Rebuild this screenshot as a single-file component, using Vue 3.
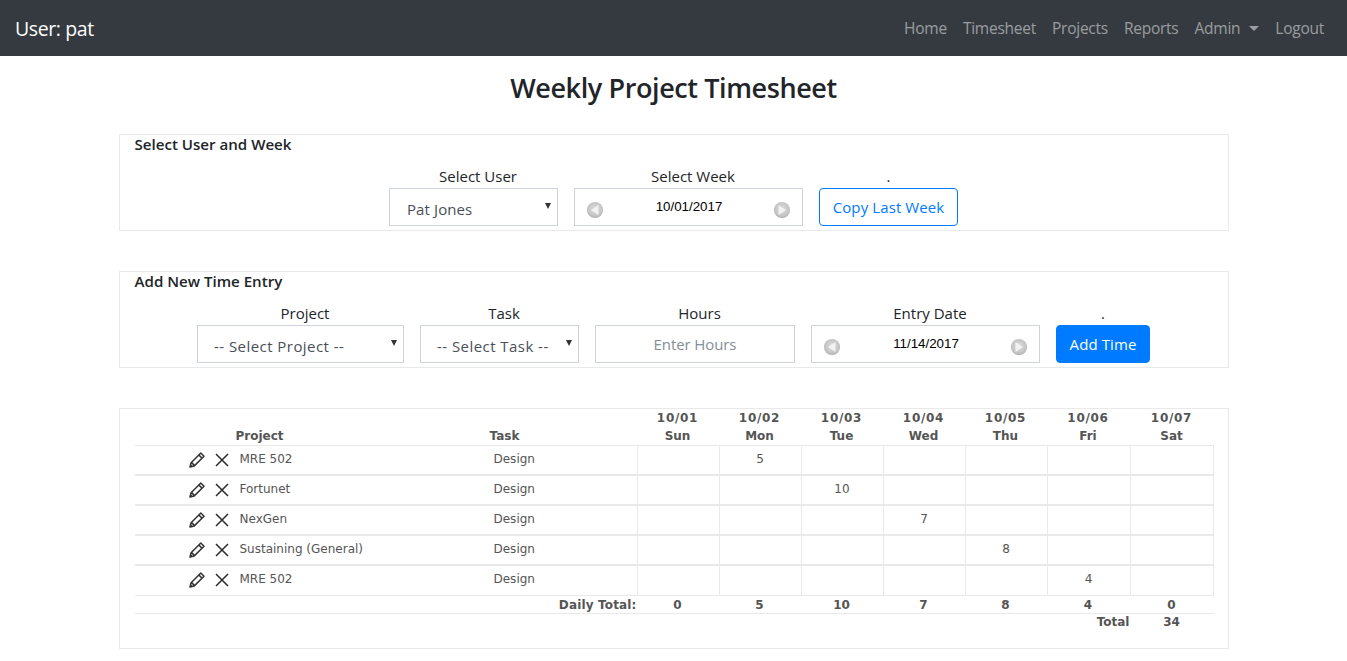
<script setup>
const weekDays = [
  { date: "10/01", day: "Sun" },
  { date: "10/02", day: "Mon" },
  { date: "10/03", day: "Tue" },
  { date: "10/04", day: "Wed" },
  { date: "10/05", day: "Thu" },
  { date: "10/06", day: "Fri" },
  { date: "10/07", day: "Sat" },
];

const entries = [
  { project: "MRE 502", task: "Design", hours: ["", 5, "", "", "", "", ""] },
  { project: "Fortunet", task: "Design", hours: ["", "", 10, "", "", "", ""] },
  { project: "NexGen", task: "Design", hours: ["", "", "", 7, "", "", ""] },
  { project: "Sustaining (General)", task: "Design", hours: ["", "", "", "", 8, "", ""] },
  { project: "MRE 502", task: "Design", hours: ["", "", "", "", "", 4, ""] },
];

const dailyTotals = [0, 5, 10, 7, 8, 4, 0];
const navLinks = ["Home", "Timesheet", "Projects", "Reports"];
</script>

<template>
  <nav class="navbar">
    <span class="brand">User: pat</span>
    <ul class="nav">
      <li v-for="link in navLinks" :key="link"><a>{{ link }}</a></li>
      <li><a class="dropdown">Admin</a></li>
      <li><a>Logout</a></li>
    </ul>
  </nav>

  <main class="container">
    <h3 class="title">Weekly Project Timesheet</h3>

    <section class="panel panel-week">
      <h6>Select User and Week</h6>
      <div class="fields">
        <div class="field">
          <label>Select User</label>
          <div class="select w-user"><span>Pat Jones</span><i></i></div>
        </div>
        <div class="field">
          <label>Select Week</label>
          <div class="datepicker">
            <svg class="arrow" viewBox="0 0 18 18"><defs><radialGradient id="g1" cx="50%" cy="45%" r="55%"><stop offset="0" stop-color="#dedede" /><stop offset="0.8" stop-color="#c4c4c4" /><stop offset="1" stop-color="#a9a9a9" /></radialGradient></defs><circle cx="9" cy="9" r="8" fill="url(#g1)" /><path d="M12.5 4v10L5 9z" fill="#f2f2f2" /></svg>
            <input class="date-input" value="10/01/2017" />
            <svg class="arrow" viewBox="0 0 18 18"><circle cx="9" cy="9" r="8" fill="url(#g1)" /><path d="M5.5 4v10L13 9z" fill="#f2f2f2" /></svg>
          </div>
        </div>
        <div class="field">
          <label class="dot">.</label>
          <button class="btn btn-outline">Copy Last Week</button>
        </div>
      </div>
    </section>

    <section class="panel panel-entry">
      <h6>Add New Time Entry</h6>
      <div class="fields">
        <div class="field">
          <label>Project</label>
          <div class="select w-project"><span>-- Select Project --</span><i></i></div>
        </div>
        <div class="field">
          <label>Task</label>
          <div class="select w-task"><span>-- Select Task --</span><i></i></div>
        </div>
        <div class="field">
          <label>Hours</label>
          <input class="hours" placeholder="Enter Hours" />
        </div>
        <div class="field">
          <label>Entry Date</label>
          <div class="datepicker">
            <svg class="arrow" viewBox="0 0 18 18"><circle cx="9" cy="9" r="8" fill="url(#g1)" /><path d="M12.5 4v10L5 9z" fill="#f2f2f2" /></svg>
            <input class="date-input" value="11/14/2017" />
            <svg class="arrow" viewBox="0 0 18 18"><circle cx="9" cy="9" r="8" fill="url(#g1)" /><path d="M5.5 4v10L13 9z" fill="#f2f2f2" /></svg>
          </div>
        </div>
        <div class="field">
          <label class="dot">.</label>
          <button class="btn btn-primary">Add Time</button>
        </div>
      </div>
    </section>

    <section class="panel panel-table">
      <table class="sheet">
        <colgroup>
          <col class="c-actions" />
          <col class="c-project" />
          <col class="c-task" />
          <col v-for="d in weekDays" :key="d.date" class="c-day" />
        </colgroup>
        <thead>
          <tr>
            <th></th>
            <th class="left head-project">Project</th>
            <th class="left head-task">Task</th>
            <th v-for="d in weekDays" :key="d.date"><span class="th-date">{{ d.date }}</span><br />{{ d.day }}</th>
          </tr>
        </thead>
        <tbody>
          <tr v-for="(row, i) in entries" :key="i">
            <td class="actions">
              <svg class="icon" viewBox="0 0 16 16"><path d="M11.8 1l3.2 3.2L5.3 13.9 1 15l1.1-4.3z M10.2 3.4l2.4 2.4 M2.9 10.9l2.2 2.2" fill="none" stroke="#333" stroke-width="1.5" stroke-linejoin="round" /><path d="M1 15l.7-2.8 2.1 2.1z" fill="#333" /></svg>
              <svg class="icon x" viewBox="0 0 14 14"><path d="M1 1l12 12M13 1L1 13" fill="none" stroke="#2b2b2b" stroke-width="1.5" /></svg>
            </td>
            <td class="left">{{ row.project }}</td>
            <td class="left task">{{ row.task }}</td>
            <td v-for="(h, j) in row.hours" :key="j" class="hour">{{ h }}</td>
          </tr>
        </tbody>
        <tfoot>
          <tr class="daily">
            <td colspan="3" class="daily-label">Daily Total:</td>
            <td v-for="(t, j) in dailyTotals" :key="j">{{ t }}</td>
          </tr>
          <tr class="grand">
            <td colspan="9" class="grand-label">Total</td>
            <td class="grand-value">34</td>
          </tr>
        </tfoot>
      </table>
    </section>
  </main>
</template>

<style>
body {
  background: #fff;
}
</style>

<style scoped>
.navbar {
  height: 56px;
  box-sizing: border-box;
  background: #343a40;
  display: flex;
  align-items: center;
  justify-content: space-between;
  padding: 0 15px 0 15px;
  font-family: "Open Sans", "Noto Sans", sans-serif;
}

.brand {
  color: #fff;
  font-size: 19.5px;
  letter-spacing: -0.4px;
}

.nav {
  display: flex;
  list-style: none;
  margin: 0;
  padding: 0;
}

.nav a {
  display: block;
  padding: 8px;
  font-size: 15.5px;
  letter-spacing: -0.25px;
  color: rgba(255, 255, 255, 0.5);
}

.dropdown::after {
  content: "";
  display: inline-block;
  margin-left: 9px;
  vertical-align: 3px;
  border-top: 5px solid rgba(255, 255, 255, 0.5);
  border-left: 5px solid transparent;
  border-right: 5px solid transparent;
}

.container {
  width: 1110px;
  margin: 0 auto;
  font-family: "Open Sans", "Noto Sans", sans-serif;
  color: #212529;
}

.title {
  margin: 0;
  padding-top: 14px;
  height: 78px;
  box-sizing: border-box;
  text-align: center;
  font-size: 27px;
  font-weight: 600;
  line-height: 35px;
  letter-spacing: -0.4px;
}

.panel {
  border: 1px solid #e9e9e9;
  box-sizing: border-box;
}

.panel h6 {
  margin: 0;
  padding-left: 15px;
  font-size: 15.1px;
  font-weight: 600;
  line-height: 19px;
}

.panel-week {
  height: 97px;
  margin-bottom: 40px;
}

.panel-entry {
  height: 97px;
  margin-bottom: 40px;
}

.panel-table {
  height: 241px;
  padding: 0 14px 0 15px;
}

.fields {
  display: flex;
  justify-content: center;
  gap: 16px;
  margin-top: 12px;
}

.field {
  display: flex;
  flex-direction: column;
  align-items: center;
}

.field label {
  height: 22px;
  line-height: 20px;
  font-size: 15px;
  padding-left: 9px;
}

.field label.dot {
  padding-left: 0;
}

.select {
  position: relative;
  height: 38px;
  box-sizing: border-box;
  border: 1px solid #ced4da;
  padding: 10px 0 0 17px;
  font-size: 15px;
  line-height: 20px;
  letter-spacing: 0.1px;
  color: #495057;
}

.select i {
  position: absolute;
  right: 6px;
  top: 14px;
  border-top: 6px solid #333;
  border-left: 3px solid transparent;
  border-right: 3px solid transparent;
}

.w-user {
  width: 169px;
}

.w-project {
  width: 207px;
  padding-left: 16px;
  letter-spacing: 0.45px;
}

.w-task {
  width: 159px;
  padding-left: 16px;
  letter-spacing: 0.45px;
}

.datepicker {
  width: 229px;
  height: 38px;
  box-sizing: border-box;
  border: 1px solid #ced4da;
  padding: 1px 11px 0;
  display: flex;
  align-items: center;
  justify-content: space-between;
}

.arrow {
  width: 18px;
  height: 18px;
  margin-top: 5px;
}

.date-input {
  width: 150px;
  border: 0;
  outline: 0;
  padding: 0 0 0 1px;
  margin-top: -2px;
  text-align: center;
  font-family: "Liberation Sans", Arial, sans-serif;
  font-size: 13.33px;
  color: #000;
}

.hours {
  width: 200px;
  height: 38px;
  box-sizing: border-box;
  border: 1px solid #ced4da;
  outline: 0;
  padding: 0 0 1px;
  text-align: center;
  font-family: inherit;
  font-size: 15px;
  letter-spacing: -0.1px;
}

.hours::placeholder {
  color: #868e96;
}

.btn {
  height: 38px;
  box-sizing: border-box;
  border-radius: 4px;
  padding: 0 13px;
  font-family: inherit;
  font-size: 15px;
  letter-spacing: 0.1px;
  cursor: pointer;
}

.btn-outline {
  width: 139px;
  padding: 0;
  background: #fff;
  color: #007bff;
  border: 1px solid #007bff;
}

.btn-primary {
  width: 94px;
  padding: 0;
  background: #007bff;
  color: #fff;
  border: 1px solid #007bff;
}

.sheet {
  width: 1079px;
  table-layout: fixed;
  border-collapse: separate;
  border-spacing: 0;
  font-family: "DejaVu Sans", Verdana, sans-serif;
  font-size: 12px;
  color: #555;
}

.c-actions {
  width: 97px;
}

.c-project {
  width: 254px;
}

.c-task {
  width: 151px;
}

.c-day {
  width: 82px;
}

.sheet col:nth-child(9) {
  width: 83px;
}

.sheet col:nth-child(10) {
  width: 84px;
}

.sheet th {
  height: 36px;
  padding: 0;
  vertical-align: bottom;
  line-height: 18px;
  font-size: 12px;
  font-weight: 700;
  text-align: center;
  color: #555;
  border-bottom: 1px solid #e9e9e9;
}

.th-date {
  letter-spacing: 0.7px;
}

.sheet th.left,
.sheet td.left {
  text-align: left;
}

.head-project,
.head-task {
  padding-left: 4px !important;
}

.sheet tbody td {
  box-sizing: border-box;
  height: 30px;
  padding: 0 0 2px;
  border-bottom: 1px solid #e9e9e9;
  border-top: 1px solid #e9e9e9;
  line-height: 20px;
  vertical-align: middle;
}

.sheet tbody tr:first-child td {
  height: 29px;
  border-top: 0;
}

.sheet tbody tr:last-child td {
  border-bottom: 0;
  padding-bottom: 4px;
}

.sheet tbody td.left {
  padding-left: 8px;
}

.sheet tbody td.hour {
  text-align: center;
  border-left: 1px solid #e9e9e9;
}

.sheet tbody td.hour:last-child {
  border-right: 1px solid #e9e9e9;
}

.sheet tbody td.actions {
  padding: 0;
  text-align: right;
  white-space: nowrap;
  font-size: 0;
  line-height: 0;
  vertical-align: top;
}

.icon {
  width: 16px;
  height: 16px;
  margin-top: 6px;
  vertical-align: top;
}

.icon.x {
  margin-top: 7px;
  margin-left: 10px;
  margin-right: 3px;
  width: 14px;
  height: 14px;
}

.daily td {
  box-sizing: border-box;
  height: 19px;
  padding: 0;
  text-align: center;
  font-weight: 700;
  font-size: 12px;
  line-height: 16px;
  border-top: 1px solid #e9e9e9;
  border-bottom: 1px solid #e9e9e9;
}

.daily .daily-label {
  text-align: right;
  letter-spacing: 0.15px;
}

.grand td {
  padding: 0;
  font-weight: 700;
  font-size: 12px;
  line-height: 17px;
}

.grand-label {
  text-align: right;
}

.grand-value {
  text-align: center;
}
</style>
